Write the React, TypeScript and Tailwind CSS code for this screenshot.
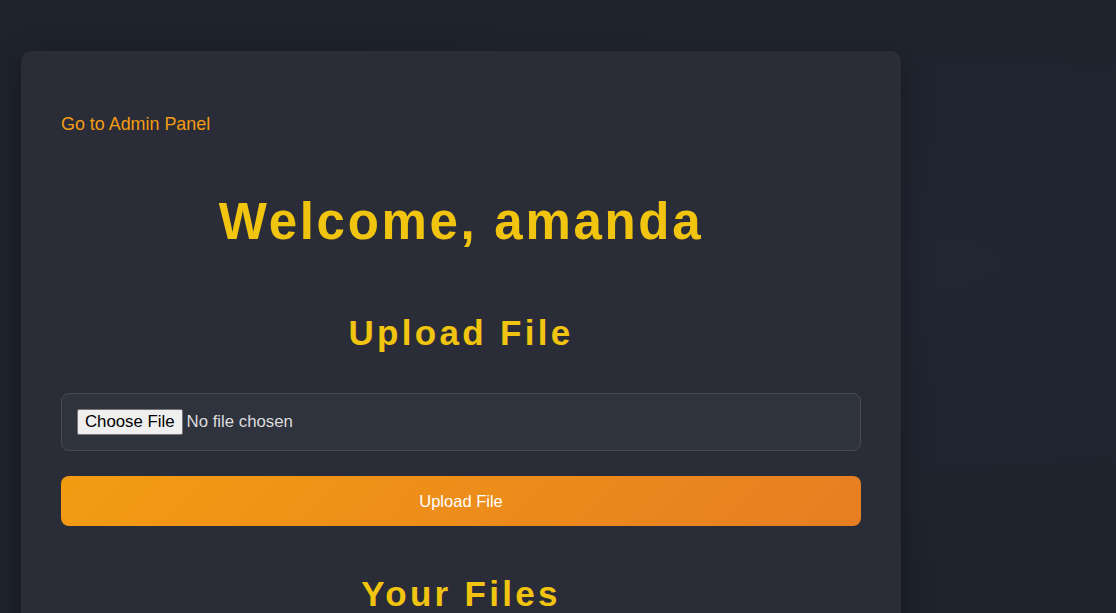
import { useState } from "react";

export default function App() {
  const [fileName, setFileName] = useState<string | null>(null);

  return (
    <div className="min-h-screen bg-[radial-gradient(ellipse_at_85%_40%,#222633_0%,#1f232d_60%)] px-[21px] pt-[51px] font-['Liberation_Sans',Arial,sans-serif]">
      <div className="w-[880px] rounded-[10px] bg-[#2a2d38] p-10 shadow-[0_8px_30px_rgba(0,0,0,0.35)]">
        {/* Admin link */}
        <div className="pt-[22px]">
          <a href="#" className="text-[17.9px] leading-[20px] text-[#f39c12] hover:underline">
            Go to Admin Panel
          </a>
        </div>

        {/* Greeting */}
        <h1 className="mt-[55px] text-center text-[51px] font-bold leading-[60px] tracking-[2.7px] text-[#f1c40f]">
          Welcome, amanda
        </h1>

        {/* Upload */}
        <h2 className="mt-[60px] text-center text-[35px] font-bold leading-[42px] tracking-[3.3px] text-[#f1c40f]">
          Upload File
        </h2>

        <form className="mt-[39px] flex flex-col gap-[25px]" onSubmit={(e) => e.preventDefault()}>
          <div className="rounded-lg border border-[#474a52] bg-[#2f333e] p-[15px]">
            <input
              type="file"
              className="block text-[16.8px] leading-[20px] text-[#dcdcdc] file:mr-[4px] file:rounded-[2px] file:border file:border-solid file:border-[#767676] file:bg-[#efefef] file:px-[7px] file:py-[2px] file:text-black"
              onChange={(e) => setFileName(e.target.files?.[0]?.name ?? null)}
            />
          </div>
          <button
            type="submit"
            className="h-[50px] w-full rounded-lg bg-[linear-gradient(135deg,#f39c12,#e67e22)] text-[16.5px] text-white"
          >
            Upload File
          </button>
        </form>

        {/* File list */}
        <h2 className="mt-[47px] text-center text-[35px] font-bold leading-[42px] tracking-[3.3px] text-[#f1c40f]">
          Your Files
        </h2>
        {fileName && <p className="mt-4 text-center text-[#dcdcdc]">{fileName}</p>}
      </div>
    </div>
  );
}
